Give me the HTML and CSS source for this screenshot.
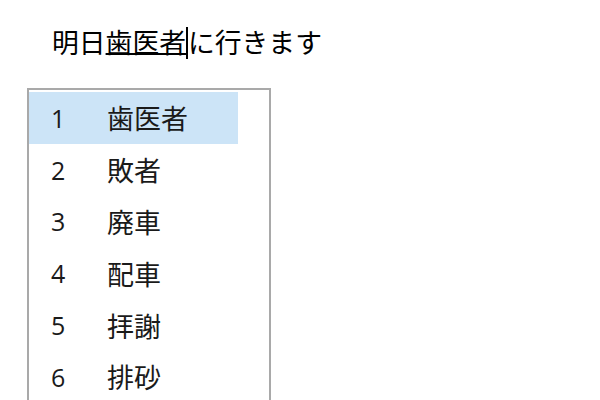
FILE: index.html
```html
<!DOCTYPE html>
<html lang="ja">
<head>
<meta charset="utf-8">
<link rel="stylesheet" href="styles.css">
</head>
<body>
<div class="editor">
  <p class="line">明日<span class="comp">歯医者</span><span class="caret"></span>に行きます</p>
</div>
<div class="candidates">
  <ul class="list">
    <li class="item selected"><span class="num">1</span><span class="word">歯医者</span></li>
    <li class="item"><span class="num">2</span><span class="word">敗者</span></li>
    <li class="item"><span class="num">3</span><span class="word">廃車</span></li>
    <li class="item"><span class="num">4</span><span class="word">配車</span></li>
    <li class="item"><span class="num">5</span><span class="word">拝謝</span></li>
    <li class="item"><span class="num">6</span><span class="word">排砂</span></li>
  </ul>
</div>
</body>
</html>
```
FILE: styles.css
```css
html, body {
  margin: 0;
  padding: 0;
  background: #ffffff;
  width: 600px;
  height: 400px;
  overflow: hidden;
}
body {
  font-family: "Noto Sans CJK JP", "Noto Sans", sans-serif;
}
.editor {
  padding: 27px 0 0 52px;
  height: 88px;
  box-sizing: border-box;
}
.line {
  margin: 0;
  font-size: 26.8px;
  line-height: 27px;
  color: #000000;
  white-space: nowrap;
}
.comp {
  text-decoration: underline;
  text-decoration-thickness: 2px;
  text-underline-offset: 0px;
  text-decoration-color: #000000;
}
.caret {
  display: inline-block;
  width: 0;
  height: 32px;
  border-left: 2px solid #000000;
  vertical-align: -6px;
}
.candidates {
  margin-left: 27px;
  width: 244px;
  height: 320px;
  box-sizing: border-box;
  border: 2px solid #a9a9a9;
  padding-top: 2px;
  overflow: hidden;
}
.list {
  list-style: none;
  margin: 0;
  padding: 0;
  width: 209px;
}
.item {
  display: flex;
  align-items: center;
  height: 51.8px;
  font-size: 27px;
  color: #1a1a1a;
}
.item.selected {
  background: #cce4f7;
}
.num {
  width: 56px;
  padding-left: 22px;
  font-family: "Open Sans", "Noto Sans", sans-serif;
  font-size: 25px;
}
.word {
  white-space: nowrap;
}
```
